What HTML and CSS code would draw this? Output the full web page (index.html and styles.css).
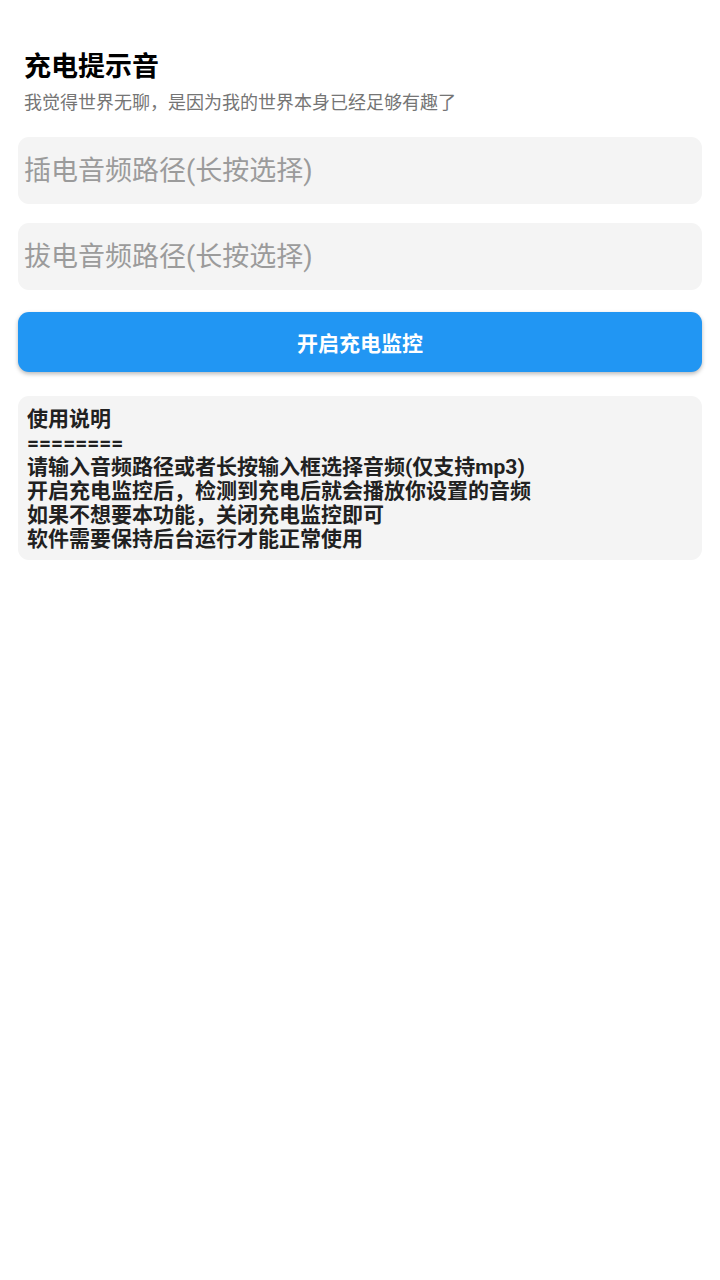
FILE: index.html
```html
<!DOCTYPE html>
<html lang="zh-CN">
<head>
<meta charset="utf-8">
<title>充电提示音</title>
<link rel="stylesheet" href="styles.css">
</head>
<body>
<div class="page">
  <header class="head">
    <h1 class="title">充电提示音</h1>
    <p class="subtitle">我觉得世界无聊，是因为我的世界本身已经足够有趣了</p>
  </header>
  <input class="field" type="text" placeholder="插电音频路径(长按选择)">
  <input class="field field-second" type="text" placeholder="拔电音频路径(长按选择)">
  <button class="btn" type="button">开启充电监控</button>
  <div class="info">使用说明<br>========<br>请输入音频路径或者长按输入框选择音频(仅支持mp3)<br>开启充电监控后，检测到充电后就会播放你设置的音频<br>如果不想要本功能，关闭充电监控即可<br>软件需要保持后台运行才能正常使用</div>
</div>
</body>
</html>
```
FILE: styles.css
```css
html, body {
  margin: 0;
  padding: 0;
  background: #ffffff;
}
body {
  font-family: Roboto, "Noto Sans CJK SC", sans-serif;
}
.page {
  display: flex;
  flex-direction: column;
  padding: 50px 18px 0 18px;
}
.head {
  padding-left: 6px;
}
.title {
  margin: 0;
  font-size: 27px;
  line-height: 34px;
  font-weight: 700;
  color: #000000;
}
.subtitle {
  margin: 7px 0 0 0;
  font-size: 18px;
  line-height: 24px;
  color: #757575;
}
.field {
  margin: 22px 0 0 0;
  height: 67px;
  box-sizing: border-box;
  border: none;
  outline: none;
  border-radius: 11px;
  background: #f4f4f4;
  padding: 0 6px;
  font-family: Roboto, "Noto Sans CJK SC", sans-serif;
  font-size: 27px;
  color: #212121;
}
.field::placeholder {
  color: #9b9b9b;
}
.field-second {
  margin-top: 19px;
}
.btn {
  margin-top: 22px;
  height: 60px;
  border: none;
  border-radius: 11px;
  background: #2196f3;
  color: #ffffff;
  font-family: Roboto, "Noto Sans CJK SC", sans-serif;
  font-size: 21px;
  font-weight: 700;
  box-shadow: 0 2px 4px rgba(0, 0, 0, 0.28);
}
.info {
  margin-top: 24px;
  background: #f4f4f4;
  border-radius: 11px;
  padding: 11px 9px 9px 9px;
  font-size: 21px;
  line-height: 24px;
  font-weight: 700;
  color: #212121;
}
```
